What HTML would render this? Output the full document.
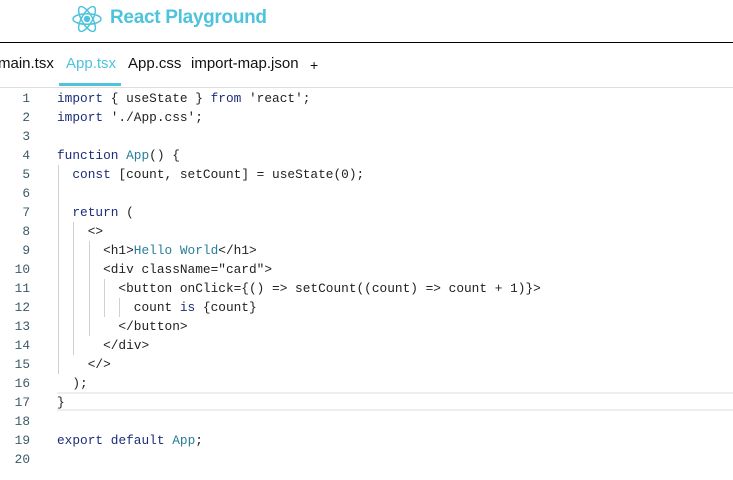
<!DOCTYPE html>
<html><head><meta charset="utf-8"><style>
*{margin:0;padding:0;box-sizing:border-box}
body{width:733px;height:480px;background:#fff;overflow:hidden;position:relative;font-family:"Liberation Sans",sans-serif}
.hdr{position:absolute;left:0;top:0;width:733px;height:43px;border-bottom:1px solid #000}
.logo{position:absolute;left:71px;top:4px}
.title{position:absolute;left:110px;top:7px;font-size:19px;font-weight:bold;color:#4ec3dc;letter-spacing:-0.3px}
.tabs{position:absolute;left:0;top:43px;width:733px;height:45px;border-bottom:1px solid #ddd}
.tab{position:absolute;top:12px;font-size:15px;color:#111}
.ul{position:absolute;left:59px;top:40px;width:62px;height:3px;background:#4ec3dc}
.code{position:absolute;left:0;top:89px;width:733px;font-family:"Liberation Mono",monospace;font-size:12.8px;line-height:19px}
.l{position:relative;height:19px;white-space:pre;color:#222}
.n{position:absolute;left:0;width:30px;text-align:right;color:#3c5a6a}
.t{position:absolute;left:57px}
.k{color:#1c2d7a}.a{color:#267f99}.s{color:#a31515}.b{color:#0431fa}
.g{position:absolute;width:1px;background:#d0d0d0}
.cur{position:absolute;left:57px;right:0;top:303px;height:19px;border-top:2px solid #eee;border-bottom:2px solid #eee}
</style></head><body>
<div class="hdr">
<svg class="logo" width="32" height="30" viewBox="-16 -15 32 30" fill="none" stroke="#4ec3dc" stroke-width="1.5">
<ellipse rx="14" ry="5.3"/><ellipse rx="14" ry="5.3" transform="rotate(60)"/><ellipse rx="14" ry="5.3" transform="rotate(120)"/><circle r="2.5" fill="#4ec3dc"/></svg>
<div class="title">React Playground</div>
</div>
<div class="tabs">
<div class="tab" style="left:-2px">main.tsx</div>
<div class="tab" style="left:66px;color:#4ec3dc">App.tsx</div>
<div class="tab" style="left:128px">App.css</div>
<div class="tab" style="left:191px">import-map.json</div>
<div class="tab" style="left:310px;top:14px;font-size:14px">+</div>
<div class="ul"></div>
</div>
<div class="code">
<div class="cur"></div>
<div class="g" style="left:58px;top:76px;height:209px"></div>
<div class="g" style="left:73px;top:133px;height:133px"></div>
<div class="g" style="left:89px;top:152px;height:95px"></div>
<div class="g" style="left:104px;top:190px;height:38px"></div>
<div class="g" style="left:119px;top:209px;height:19px"></div>
<div class="l"><span class="n">1</span><span class="t"><span class="k">import</span> { useState } <span class="k">from</span> 'react';</span></div>
<div class="l"><span class="n">2</span><span class="t"><span class="k">import</span> './App.css';</span></div>
<div class="l"><span class="n">3</span></div>
<div class="l"><span class="n">4</span><span class="t"><span class="k">function</span> <span class="a">App</span>() {</span></div>
<div class="l"><span class="n">5</span><span class="t">  <span class="k">const</span> [count, setCount] = useState(0);</span></div>
<div class="l"><span class="n">6</span></div>
<div class="l"><span class="n">7</span><span class="t">  <span class="k">return</span> (</span></div>
<div class="l"><span class="n">8</span><span class="t">    &lt;&gt;</span></div>
<div class="l"><span class="n">9</span><span class="t">      &lt;h1&gt;<span class="a">Hello World</span>&lt;/h1&gt;</span></div>
<div class="l"><span class="n">10</span><span class="t">      &lt;div className="card"&gt;</span></div>
<div class="l"><span class="n">11</span><span class="t">        &lt;button onClick={() =&gt; setCount((count) =&gt; count + 1)}&gt;</span></div>
<div class="l"><span class="n">12</span><span class="t">          count <span class="k">is</span> {count}</span></div>
<div class="l"><span class="n">13</span><span class="t">        &lt;/button&gt;</span></div>
<div class="l"><span class="n">14</span><span class="t">      &lt;/div&gt;</span></div>
<div class="l"><span class="n">15</span><span class="t">    &lt;/&gt;</span></div>
<div class="l"><span class="n">16</span><span class="t">  );</span></div>
<div class="l"><span class="n">17</span><span class="t">}</span></div>
<div class="l"><span class="n">18</span></div>
<div class="l"><span class="n">19</span><span class="t"><span class="k">export</span> <span class="k">default</span> <span class="a">App</span>;</span></div>
<div class="l"><span class="n">20</span></div>
</div>
</body></html>
